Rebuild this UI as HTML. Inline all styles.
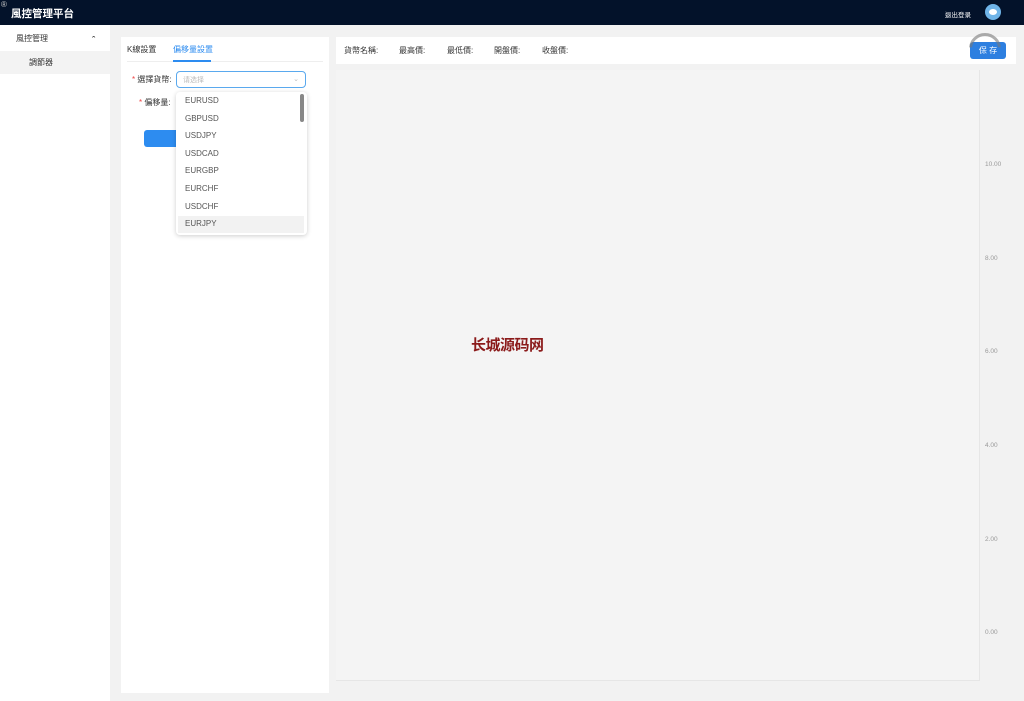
<!DOCTYPE html>
<html><head><meta charset="utf-8"><style>
*{margin:0;padding:0;box-sizing:border-box}
body{width:1024px;height:701px;overflow:hidden;background:#f2f2f2;font-family:"Liberation Sans","Noto Sans CJK TC",sans-serif;font-size:8px;color:#333;position:relative}
.abs{position:absolute}
</style></head><body>
<div class="abs" style="left:0;top:0;width:1024px;height:25px;background:#03122a"></div>
<div class="abs" style="left:1px;top:0;color:#ccc;font-size:8px">®</div>
<div class="abs" style="left:11px;top:6px;color:#fff;font-size:10.5px;font-weight:bold">風控管理平台</div>
<div class="abs" style="left:945px;top:9px;color:#fff;font-size:6.5px">退出登录</div>
<div class="abs" style="left:985px;top:4px;width:16px;height:16px;border-radius:50%;background:#6fb4e8"><div class="abs" style="left:4px;top:5px;width:8px;height:6px;border-radius:50%;background:#fff"></div></div>
<div class="abs" style="left:0;top:25px;width:110px;height:676px;background:#fff"></div>
<div class="abs" style="left:16px;top:33px;font-size:8px">風控管理</div>
<div class="abs" style="left:92px;top:35px;font-size:9px;font-weight:bold">ˆ</div>
<div class="abs" style="left:0;top:51px;width:110px;height:23px;background:#f3f3f3"></div>
<div class="abs" style="left:29px;top:57px;font-size:8px">調節器</div>
<div class="abs" style="left:121px;top:37px;width:208px;height:656px;background:#fff"></div>
<div class="abs" style="left:127px;top:44px">K線設置</div>
<div class="abs" style="left:173px;top:44px;color:#2d8cf0">偏移量設置</div>
<div class="abs" style="left:127px;top:61px;width:196px;height:1px;background:#eee"></div>
<div class="abs" style="left:173px;top:60px;width:38px;height:2px;background:#2d8cf0"></div>
<div class="abs" style="left:132px;top:74px"><span style="color:#e44">* </span>選擇貨幣:</div>
<div class="abs" style="left:176px;top:71px;width:130px;height:17px;border:1px solid #5aa9ee;border-radius:4px;color:#bbb;padding:3px 6px;font-size:7px">请选择<span style="float:right">⌄</span></div>
<div class="abs" style="left:139px;top:97px"><span style="color:#e44">* </span>偏移量:</div>
<div class="abs" style="left:144px;top:130px;width:40px;height:17px;background:#2d8cf0;border-radius:3px"></div>
<div class="abs" style="left:176px;top:92px;width:131px;height:143px;background:#fff;border-radius:4px;box-shadow:0 1px 5px rgba(0,0,0,.2)"></div>
<div class="abs" style="left:178px;top:216px;width:126px;height:17px;background:#f2f2f2"></div>
<div class="abs" style="left:300px;top:94px;width:4px;height:28px;background:#888;border-radius:2px"></div>
<div class="abs" style="left:185px;top:92px;line-height:17.6px;font-size:8px;color:#555">EURUSD<br>GBPUSD<br>USDJPY<br>USDCAD<br>EURGBP<br>EURCHF<br>USDCHF<br>EURJPY</div>
<div class="abs" style="left:336px;top:37px;width:680px;height:27px;background:#fff"></div>
<div class="abs" style="left:344px;top:45px">貨幣名稱:</div>
<div class="abs" style="left:399px;top:45px">最高價:</div>
<div class="abs" style="left:447px;top:45px">最低價:</div>
<div class="abs" style="left:494px;top:45px">開盤價:</div>
<div class="abs" style="left:542px;top:45px">收盤價:</div>
<div class="abs" style="left:970px;top:42px;width:36px;height:17px;background:#2d7fe0;border-radius:3px;color:#fff;font-size:8px;text-align:center;line-height:17px">保 存</div>
<div class="abs" style="left:969px;top:33px;width:32px;height:32px;border:3px solid rgba(120,120,120,.6);border-radius:50%;clip-path:inset(0 0 55% 0)"></div>
<div class="abs" style="left:336px;top:70px;width:644px;height:611px;background:#f4f4f4;border-right:1px solid #e6e6e6;border-bottom:1px solid #e6e6e6"></div>
<div class="abs" style="left:985px;top:161px;font-size:6.5px;color:#999">10.00</div>
<div class="abs" style="left:985px;top:255px;font-size:6.5px;color:#999">8.00</div>
<div class="abs" style="left:985px;top:348px;font-size:6.5px;color:#999">6.00</div>
<div class="abs" style="left:985px;top:442px;font-size:6.5px;color:#999">4.00</div>
<div class="abs" style="left:985px;top:536px;font-size:6.5px;color:#999">2.00</div>
<div class="abs" style="left:985px;top:629px;font-size:6.5px;color:#999">0.00</div>
<div class="abs" style="left:471px;top:334px;color:#8b1a1a;font-size:15px;font-weight:bold;letter-spacing:-0.5px;font-family:'Noto Sans CJK SC',sans-serif">长城源码网</div>
</body></html>
